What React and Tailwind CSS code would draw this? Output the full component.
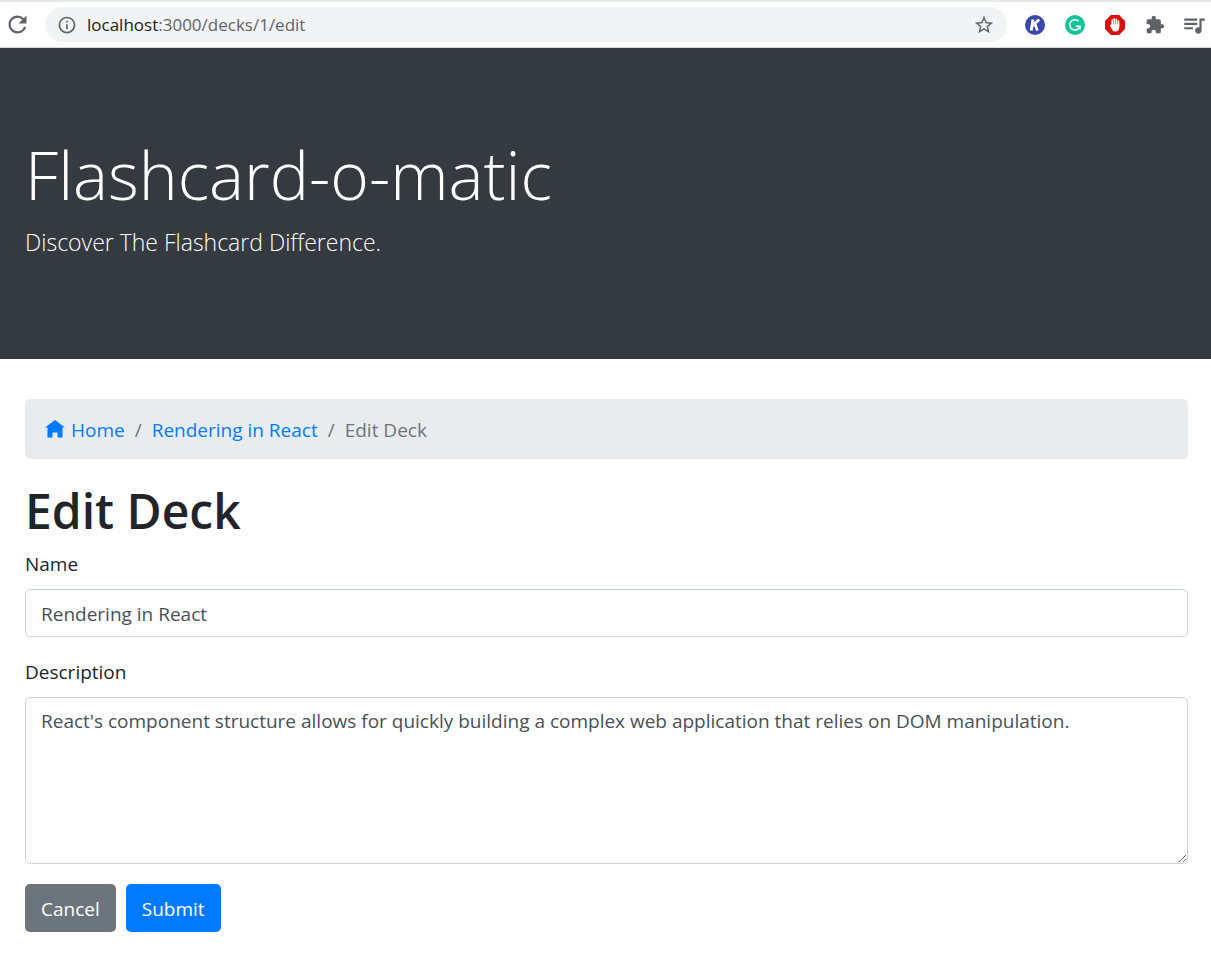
import React from "react";
import {
  MdRefresh,
  MdInfoOutline,
  MdStarBorder,
  MdExtension,
  MdQueueMusic,
} from "react-icons/md";

function KeeperIcon() {
  return (
    <svg viewBox="0 0 20 20" className="size-5" aria-hidden="true">
      <circle cx="10" cy="10" r="10" fill="#3949ab" />
      <path
        d="M8 4.6 6.2 15.4M14.2 4.6 7.8 10.6M10 9 12.4 15.4"
        fill="none"
        stroke="#fff"
        strokeWidth="2.8"
      />
    </svg>
  );
}

function GrammarIcon() {
  return (
    <svg viewBox="0 0 20 20" className="size-5" aria-hidden="true">
      <circle cx="10" cy="10" r="10" fill="#15c39a" />
      <path
        d="M13.6 6.1A5.2 5.2 0 1 0 15 11.2H10.8M15 11.2V14.4"
        fill="none"
        stroke="#fff"
        strokeWidth="1.5"
      />
    </svg>
  );
}

function BlockerIcon() {
  return (
    <svg viewBox="0 0 20 20" className="size-5" aria-hidden="true">
      <path d="M5.9 0h8.2L20 5.9v8.2L14.1 20H5.9L0 14.1V5.9z" fill="#dc0d0f" />
      <path
        d="M7.2 10V5M9.3 9.5V3.8M11.4 9.5V4.2M13.5 10.5V6"
        stroke="#fff"
        strokeWidth="1.6"
        strokeLinecap="round"
      />
      <path
        d="M6.4 9.3h7.9v3c0 2.6-1.5 4.3-3.7 4.3-1.8 0-2.8-.8-3.7-2.3l-2.1-3.7c-.3-.7.7-1.2 1.2-.6z"
        fill="#fff"
      />
    </svg>
  );
}

function BrowserBar() {
  return (
    <div className="flex h-12 items-center border-t-2 border-b border-t-[#e6e8ea] border-b-[#d5d9dc] bg-white pr-1 pl-1 text-[#5f6368]">
      <button type="button" aria-label="Reload" className="mr-3.5 shrink-0">
        <MdRefresh className="size-[27px]" />
      </button>
      <div className="mr-[18px] flex h-[35px] min-w-0 flex-1 items-center rounded-full bg-[#f1f3f4] pr-3 pl-3">
        <MdInfoOutline className="mr-2.5 size-5 shrink-0" />
        <span className="min-w-0 flex-1 truncate font-['Open_Sans',sans-serif] text-[17px] leading-6">
          <span className="text-[#202124]">localhost</span>:3000/decks/1/edit
        </span>
        <button type="button" aria-label="Bookmark this page">
          <MdStarBorder className="size-[22px]" />
        </button>
      </div>
      <div className="flex shrink-0 items-center gap-5">
        <button type="button" aria-label="Keeper">
          <KeeperIcon />
        </button>
        <button type="button" aria-label="Grammar checker">
          <GrammarIcon />
        </button>
        <button type="button" aria-label="Content blocker">
          <BlockerIcon />
        </button>
        <button type="button" aria-label="Extensions">
          <MdExtension className="size-5" />
        </button>
        <button type="button" aria-label="Media controls" className="-ml-1">
          <MdQueueMusic className="size-[26px]" />
        </button>
      </div>
    </div>
  );
}

function Breadcrumb() {
  return (
    <nav aria-label="breadcrumb" className="mb-5 rounded-[5px] bg-[#e9ecef] px-5 pt-4 pb-3.5">
      <ol className="flex flex-wrap items-center gap-2.5 text-[#6c757d]">
        <li>
          <a href="#home" className="flex items-center gap-1.5 text-[#007bff]">
            <svg viewBox="0 0 8 8" className="size-5" fill="currentColor" aria-hidden="true">
              <path d="M4 0l-4 3h1v4h2v-2h2v2h2v-4l1 0-4-3z" />
            </svg>
            Home
          </a>
        </li>
        <li aria-hidden="true">/</li>
        <li>
          <a href="#deck" className="text-[#007bff]">
            Rendering in React
          </a>
        </li>
        <li aria-hidden="true">/</li>
        <li aria-current="page">Edit Deck</li>
      </ol>
    </nav>
  );
}

export default function App() {
  return (
    <div className="min-h-screen bg-white font-['Open_Sans',sans-serif] text-[19px] leading-[30px] text-[#212529]">
      <BrowserBar />
      <header className="bg-[#343a40] px-[25px] pt-[84px] pb-[98px] text-white">
        <h1 className="mb-2 text-[66px] leading-[84px] font-light">Flashcard-o-matic</h1>
        <p className="text-[23px] leading-[37px] font-light">Discover The Flashcard Difference.</p>
      </header>
      <main className="pt-10 pr-[23px] pb-6 pl-[25px]">
        <Breadcrumb />
        <h2 className="mb-2 pt-0.5 text-[48px] leading-[60px] font-semibold">Edit Deck</h2>
        <form onSubmit={(e) => e.preventDefault()}>
          <div className="mb-5">
            <label htmlFor="name" className="mb-2.5 block">
              Name
            </label>
            <input
              id="name"
              type="text"
              defaultValue="Rendering in React"
              className="block h-12 w-full rounded-[5px] border border-[#ced4da] px-[15px] pt-0.5 text-[#495057]"
            />
          </div>
          <div className="mb-5">
            <label htmlFor="description" className="mb-2.5 block">
              Description
            </label>
            <textarea
              id="description"
              defaultValue="React's component structure allows for quickly building a complex web application that relies on DOM manipulation."
              className="block h-[167px] w-full resize-y rounded-[5px] border border-[#ced4da] px-[15px] py-2 text-[#495057]"
            />
          </div>
          <div className="flex gap-2.5">
            <button type="button" className="h-12 rounded-[5px] bg-[#6c757d] px-4 pt-0.5 text-white">
              Cancel
            </button>
            <button type="submit" className="h-12 rounded-[5px] bg-[#007bff] px-4 pt-0.5 text-white">
              Submit
            </button>
          </div>
        </form>
      </main>
    </div>
  );
}
